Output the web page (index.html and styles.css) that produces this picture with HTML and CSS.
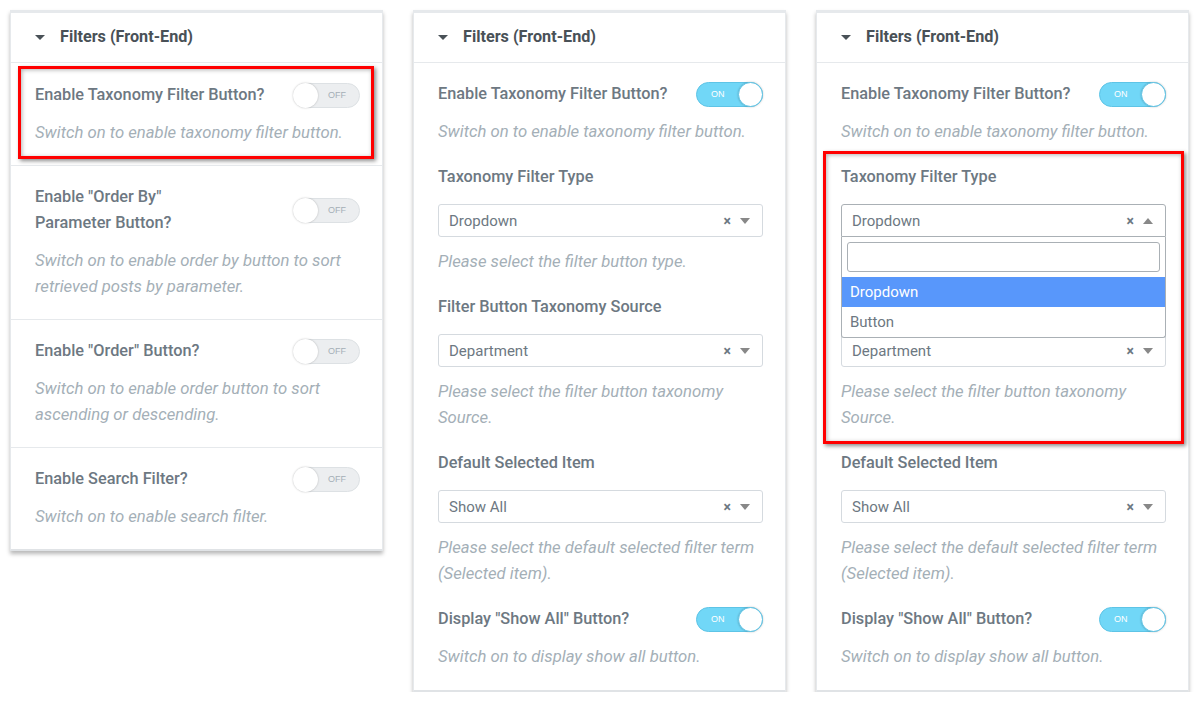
FILE: index.html
```html
<!DOCTYPE html>
<html>
<head>
<meta charset="utf-8">
<link rel="stylesheet" href="styles.css">
</head>
<body>
<div class="page">

  <div class="panel">
    <div class="head"><span class="caret"></span><span class="title">Filters (Front-End)</span></div>
    <div class="section first">
      <div class="row"><div class="label">Enable Taxonomy Filter Button?</div><div class="toggle off"><span class="knob"></span><span class="tt">OFF</span></div></div>
      <div class="desc">Switch on to enable taxonomy filter button.</div>
    </div>
    <div class="section">
      <div class="row"><div class="label">Enable "Order By"<br>Parameter Button?</div><div class="toggle off"><span class="knob"></span><span class="tt">OFF</span></div></div>
      <div class="desc">Switch on to enable order by button to sort retrieved posts by parameter.</div>
    </div>
    <div class="section">
      <div class="row"><div class="label">Enable "Order" Button?</div><div class="toggle off"><span class="knob"></span><span class="tt">OFF</span></div></div>
      <div class="desc">Switch on to enable order button to sort ascending or descending.</div>
    </div>
    <div class="section last">
      <div class="row"><div class="label">Enable Search Filter?</div><div class="toggle off"><span class="knob"></span><span class="tt">OFF</span></div></div>
      <div class="desc">Switch on to enable search filter.</div>
    </div>
    <div class="redbox red1"></div>
  </div>

  <div class="panel">
    <div class="head"><span class="caret"></span><span class="title">Filters (Front-End)</span></div>
    <div class="body">
      <div class="ctrl">
        <div class="row"><div class="label">Enable Taxonomy Filter Button?</div><div class="toggle on"><span class="tt">ON</span><span class="knob"></span></div></div>
        <div class="desc">Switch on to enable taxonomy filter button.</div>
      </div>
      <div class="ctrl">
        <div class="label">Taxonomy Filter Type</div>
        <div class="select"><span class="val">Dropdown</span><span class="clr">×</span><span class="arr"></span></div>
        <div class="desc">Please select the filter button type.</div>
      </div>
      <div class="ctrl">
        <div class="label">Filter Button Taxonomy Source</div>
        <div class="select"><span class="val">Department</span><span class="clr">×</span><span class="arr"></span></div>
        <div class="desc">Please select the filter button taxonomy Source.</div>
      </div>
      <div class="ctrl">
        <div class="label">Default Selected Item</div>
        <div class="select"><span class="val">Show All</span><span class="clr">×</span><span class="arr"></span></div>
        <div class="desc">Please select the default selected filter term (Selected item).</div>
      </div>
      <div class="ctrl">
        <div class="row"><div class="label">Display "Show All" Button?</div><div class="toggle on"><span class="tt">ON</span><span class="knob"></span></div></div>
        <div class="desc">Switch on to display show all button.</div>
      </div>
    </div>
  </div>

  <div class="panel">
    <div class="head"><span class="caret"></span><span class="title">Filters (Front-End)</span></div>
    <div class="body">
      <div class="ctrl">
        <div class="row"><div class="label">Enable Taxonomy Filter Button?</div><div class="toggle on"><span class="tt">ON</span><span class="knob"></span></div></div>
        <div class="desc">Switch on to enable taxonomy filter button.</div>
      </div>
      <div class="ctrl">
        <div class="label">Taxonomy Filter Type</div>
        <div class="selwrap">
          <div class="select open"><span class="val">Dropdown</span><span class="clr">×</span><span class="arr up"></span></div>
          <div class="dropdown">
            <div class="search"></div>
            <div class="opt hl">Dropdown</div>
            <div class="opt">Button</div>
          </div>
        </div>
        <div class="desc hidden">Please select the filter button type.</div>
      </div>
      <div class="ctrl">
        <div class="label hidden">Filter Button Taxonomy Source</div>
        <div class="select"><span class="val">Department</span><span class="clr">×</span><span class="arr"></span></div>
        <div class="desc">Please select the filter button taxonomy Source.</div>
      </div>
      <div class="ctrl">
        <div class="label">Default Selected Item</div>
        <div class="select"><span class="val">Show All</span><span class="clr">×</span><span class="arr"></span></div>
        <div class="desc">Please select the default selected filter term (Selected item).</div>
      </div>
      <div class="ctrl">
        <div class="row"><div class="label">Display "Show All" Button?</div><div class="toggle on"><span class="tt">ON</span><span class="knob"></span></div></div>
        <div class="desc">Switch on to display show all button.</div>
      </div>
    </div>
    <div class="redbox red3"></div>
  </div>

</div>
</body>
</html>
```

FILE: styles.css
```css
* { box-sizing: border-box; }
html, body { margin: 0; padding: 0; background: #fff; }
body { font-family: Roboto, "Liberation Sans", sans-serif; }

.page {
  display: flex;
  align-items: flex-start;
  gap: 30px;
  padding: 10px 0 0 10px;
}

.panel {
  position: relative;
  width: 373px;
  background: #fff;
  border: 1px solid #e6e9ec;
  border-top: 3px solid #e6e9ec;
  border-bottom: 2px solid #e0e3e6;
  box-shadow: 0 3px 4px rgba(0,0,0,0.28);
}

.head {
  height: 50px;
  display: flex;
  align-items: center;
  padding-left: 24px;
  padding-bottom: 2px;
  border-bottom: 1px solid #e6e9ec;
}
.caret {
  width: 0; height: 0;
  border-left: 5px solid transparent;
  border-right: 5px solid transparent;
  border-top: 5px solid #495157;
  margin-right: 15px;
  margin-top: 1px;
}
.title {
  font-size: 16.2px;
  font-weight: 700;
  color: #495157;
}

.section {
  padding: 18px 22px 19px 24px;
  border-bottom: 1px solid #e6e9ec;
}
.section.first { padding-top: 19px; }
.section.last { border-bottom: none; }

.row {
  display: flex;
  align-items: center;
  justify-content: space-between;
}

.label {
  font-size: 16.3px;
  font-weight: 500;
  line-height: 26px;
  color: #6d7882;
}
.desc {
  font-size: 16.7px;
  font-style: italic;
  line-height: 26px;
  color: #a4afb7;
  margin-top: 12px;
}
.hidden { visibility: hidden; }

.toggle {
  width: 67px;
  height: 25px;
  border-radius: 13px;
  display: flex;
  align-items: center;
  justify-content: space-between;
  flex-shrink: 0;
}
.toggle.off {
  background: #eceef0;
  border: 1px solid #dde1e4;
}
.toggle.on {
  background: #71d7f7;
  border: 1px solid #5ec4e6;
}
.knob {
  width: 25px;
  height: 25px;
  border-radius: 50%;
  background: #fff;
  box-shadow: 0 0 2px rgba(0,0,0,0.25);
  margin: -1px;
}
.toggle.on .knob { border: 1px solid #5ec4e6; }
.tt {
  font-size: 9px;
  font-family: "Liberation Sans", Roboto, sans-serif;
}
.toggle.off .tt { color: #a4afb7; margin-right: 13px; }
.toggle.on .tt { color: #fff; margin-left: 14px; }

.body {
  padding: 18px 22px 20px 24px;
}
.ctrl + .ctrl { margin-top: 19px; }

.select {
  margin-top: 14px;
  height: 33px;
  border: 1px solid #d5dadf;
  border-radius: 3px;
  display: flex;
  align-items: center;
  padding: 0 12px 0 10px;
  background: #fff;
}
.val {
  flex: 1;
  font-size: 15px;
  color: #6d7882;
}
.clr {
  font-size: 14px;
  font-weight: 700;
  color: #6d7882;
  margin-right: 9px;
}
.arr {
  width: 0; height: 0;
  border-left: 5px solid transparent;
  border-right: 5px solid transparent;
  border-top: 6px solid #888;
}
.arr.up {
  border-top: none;
  border-bottom: 6px solid #888;
}

.selwrap { position: relative; }
.select.open {
  border-color: #aab0b5;
  border-bottom-left-radius: 0;
  border-bottom-right-radius: 0;
}
.dropdown {
  position: absolute;
  left: 0;
  right: 0;
  top: 33px;
  background: #fff;
  border: 1px solid #aab0b5;
  border-top: none;
  border-radius: 0 0 3px 3px;
  z-index: 5;
}
.search {
  margin: 5px;
  height: 30px;
  border: 1px solid #aab0b5;
  border-radius: 3px;
}
.opt {
  height: 30px;
  line-height: 30px;
  padding-left: 8px;
  font-size: 15px;
  color: #6d7882;
}
.opt.hl {
  background: #5897fb;
  color: #fff;
}

.redbox {
  position: absolute;
  border: 3px solid #ff0000;
  box-shadow: 2px 2px 4px rgba(0,0,0,0.45), inset 1px 1px 4px rgba(0,0,0,0.3);
  z-index: 10;
  pointer-events: none;
}
.red1 { left: 7px; top: 53px; width: 356px; height: 93px; }
.red3 { left: 6px; top: 138px; width: 361px; height: 293px; }
```
